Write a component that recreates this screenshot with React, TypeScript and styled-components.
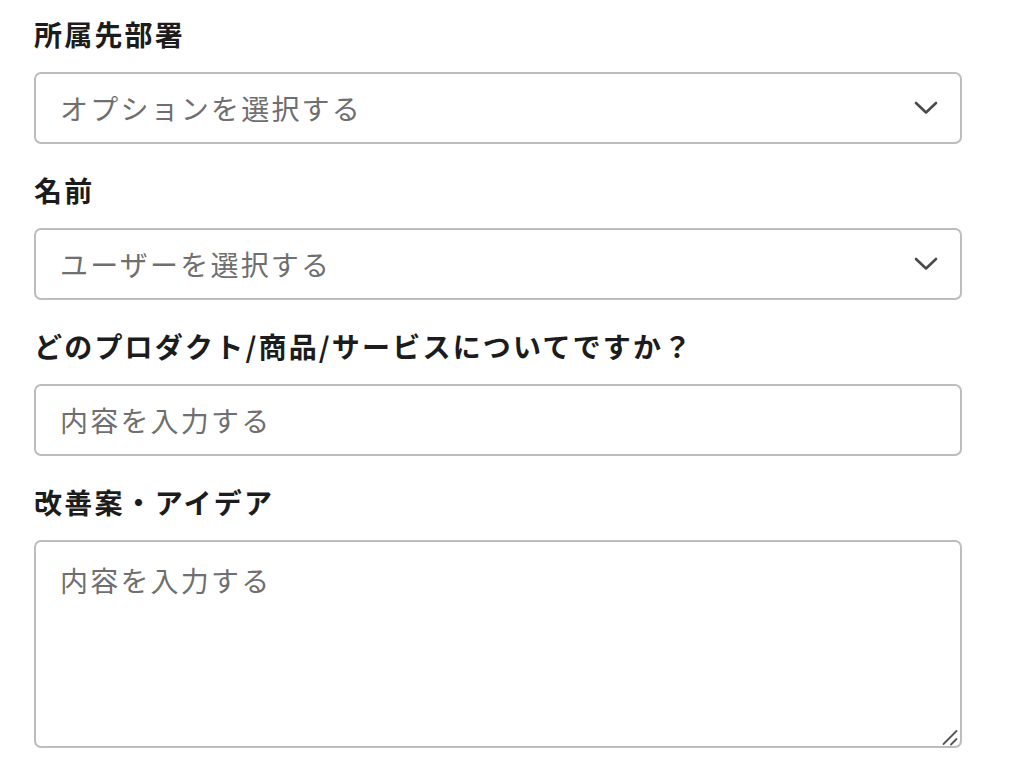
import React from 'react'
import styled, { createGlobalStyle } from 'styled-components'

const GlobalStyle = createGlobalStyle`
  html, body {
    margin: 0;
    padding: 0;
    background: #fff;
  }
  body {
    font-family: "Noto Sans CJK JP", "Noto Sans", sans-serif;
    color: #1f1f1f;
  }
`

const Form = styled.form`
  width: 928px;
  padding: 14px 0 0 34px;
  display: flex;
  flex-direction: column;
`

const Field = styled.div`
  display: flex;
  flex-direction: column;
  gap: 18px;
  margin-bottom: 26px;
`

const Label = styled.label`
  font-size: 28px;
  line-height: 40px;
  font-weight: 700;
  letter-spacing: 2.2px;
  color: #1c1c1c;
`

const controlBase = `
  box-sizing: border-box;
  display: block;
  width: 100%;
  margin: 0;
  border: 2px solid #bdbdbd;
  border-radius: 7px;
  background: #fff;
  font-family: "Noto Sans CJK JP", "Noto Sans", sans-serif;
  font-size: 28px;
  letter-spacing: 2.2px;
  color: #6f6f6f;
  outline: none;
  &::placeholder {
    color: #6f6f6f;
  }
`

const ControlWrap = styled.div`
  position: relative;
`

const Select = styled.select`
  ${controlBase}
  appearance: none;
  height: 72px;
  padding: 0 70px 0 24px;
`

const Chevron = styled.svg`
  position: absolute;
  right: 24px;
  top: 50%;
  transform: translateY(-50%);
  pointer-events: none;
`

const Input = styled.input`
  ${controlBase}
  height: 72px;
  padding: 0 24px;
`

const TextArea = styled.textarea`
  ${controlBase}
  height: 208px;
  padding: 18px 24px;
  line-height: 1.45;
  resize: none;
`

const Grip = styled.svg`
  position: absolute;
  right: 3px;
  bottom: 2px;
  pointer-events: none;
`

const SelectField = ({ label, placeholder }: { label: string; placeholder: string }) => (
  <Field>
    <Label>{label}</Label>
    <ControlWrap>
      <Select defaultValue="">
        <option value="" disabled>
          {placeholder}
        </option>
      </Select>
      <Chevron width="24" height="14" viewBox="0 0 24 14" fill="none">
        <path d="M2 2 L12 11.5 L22 2" stroke="#4a4a4a" strokeWidth="2.6" strokeLinecap="round" strokeLinejoin="round" />
      </Chevron>
    </ControlWrap>
  </Field>
)

export default function App() {
  return (
    <>
      <GlobalStyle />
      <Form onSubmit={e => e.preventDefault()}>
        <SelectField label="所属先部署" placeholder="オプションを選択する" />
        <SelectField label="名前" placeholder="ユーザーを選択する" />
        <Field>
          <Label>どのプロダクト/商品/サービスについてですか？</Label>
          <Input placeholder="内容を入力する" />
        </Field>
        <Field>
          <Label>改善案・アイデア</Label>
          <ControlWrap>
            <TextArea placeholder="内容を入力する" />
            <Grip width="18" height="18" viewBox="0 0 18 18" fill="none">
              <path d="M2.5 16 L15.5 3" stroke="#555" strokeWidth="1.8" strokeLinecap="round" />
              <path d="M10 16.5 L15.5 11" stroke="#555" strokeWidth="1.8" strokeLinecap="round" />
            </Grip>
          </ControlWrap>
        </Field>
      </Form>
    </>
  )
}
